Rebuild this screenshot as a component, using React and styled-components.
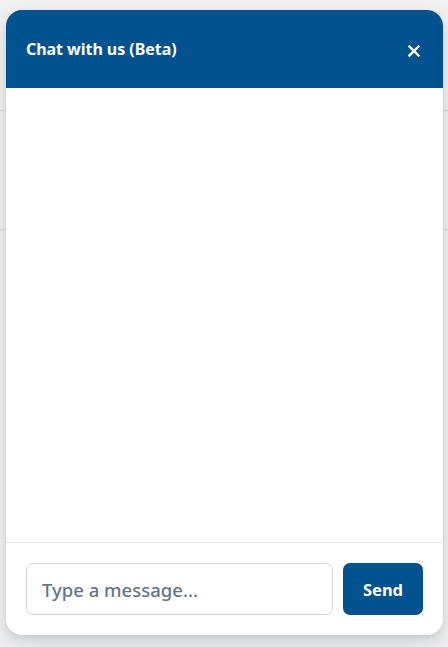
import React from "react";
import styled, { createGlobalStyle } from "styled-components";

const Global = createGlobalStyle`
  html, body { margin: 0; padding: 0; }
  body {
    background-color: #f2f2f3;
    background-image:
      linear-gradient(#d4d4d6, #d4d4d6),
      linear-gradient(#d4d4d6, #d4d4d6);
    background-size: 100% 1px, 100% 1px;
    background-position: 0 110px, 0 229px;
    background-repeat: no-repeat;
    font-family: "Noto Sans", "Open Sans", sans-serif;
    width: 448px;
    height: 647px;
    overflow: hidden;
  }
`;

const Stage = styled.div`
  display: flex;
  padding: 10px 5px 12px 6px;
  height: 647px;
  box-sizing: border-box;
`;

const Panel = styled.section`
  width: 437px;
  height: 625px;
  display: flex;
  flex-direction: column;
  background: #ffffff;
  border-radius: 16px;
  overflow: hidden;
  box-shadow: 0 8px 20px rgba(30, 41, 59, 0.16), 0 2px 6px rgba(30, 41, 59, 0.08);
`;

const Header = styled.header`
  height: 78px;
  flex: none;
  display: flex;
  align-items: center;
  justify-content: space-between;
  padding: 0 20px 0 20px;
  background: #02528f;
  color: #ffffff;
`;

const Title = styled.h2`
  margin: 0;
  font-size: 16px;
  font-weight: 700;
  letter-spacing: -0.05px;
`;

const CloseButton = styled.button`
  border: none;
  background: none;
  padding: 0;
  width: 16px;
  height: 16px;
  display: flex;
  align-items: center;
  justify-content: center;
  cursor: pointer;
  margin-right: 1px;
  margin-top: 3px;
`;

const Messages = styled.div`
  flex: 1;
  background: #ffffff;
`;

const Footer = styled.form`
  flex: none;
  display: flex;
  gap: 10px;
  padding: 20px;
  border-top: 1px solid #e5e7eb;
`;

const Input = styled.input`
  flex: 1;
  height: 52px;
  box-sizing: border-box;
  border: 1px solid #d1d5db;
  border-radius: 7px;
  padding: 0 15px;
  font-family: inherit;
  font-size: 18.5px;
  font-weight: 500;
  color: #1f2937;
  outline: none;
  &::placeholder { color: #64748b; opacity: 1; }
`;

const SendButton = styled.button`
  width: 80px;
  height: 52px;
  border: none;
  border-radius: 7px;
  background: #02528f;
  color: #ffffff;
  font-family: inherit;
  font-size: 16.5px;
  font-weight: 700;
  cursor: pointer;
`;

export default function App() {
  return (
    <>
      <Global />
      <Stage>
        <Panel>
          <Header>
            <Title>Chat with us (Beta)</Title>
            <CloseButton aria-label="Close">
              <svg width="12" height="12" viewBox="0 0 12 12">
                <path d="M1.5 1.5 L10.5 10.5 M10.5 1.5 L1.5 10.5" stroke="#fff" strokeWidth="2.4" strokeLinecap="square" />
              </svg>
            </CloseButton>
          </Header>
          <Messages />
          <Footer onSubmit={(e) => e.preventDefault()}>
            <Input placeholder="Type a message..." />
            <SendButton type="submit">Send</SendButton>
          </Footer>
        </Panel>
      </Stage>
    </>
  );
}
